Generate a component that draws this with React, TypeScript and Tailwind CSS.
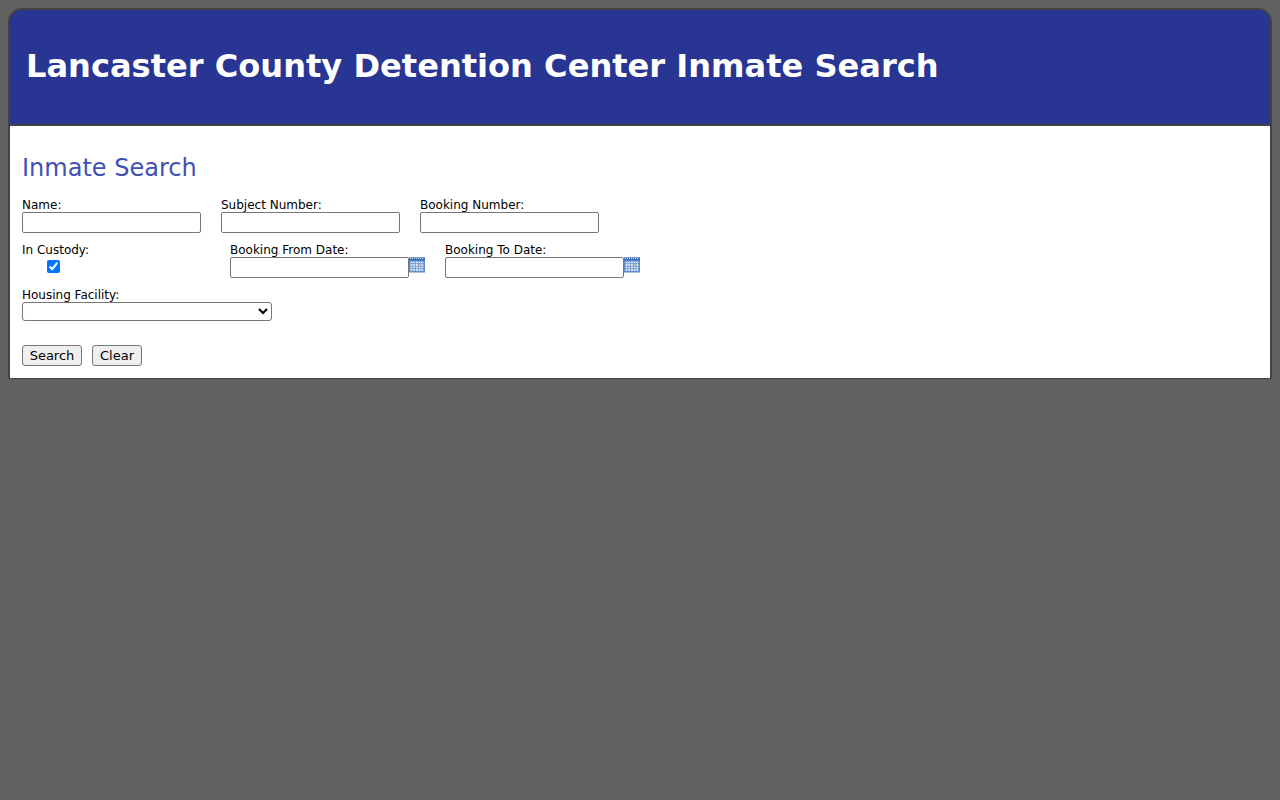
const font = "font-['DejaVu_Sans',sans-serif]";

function CalendarIcon() {
  const cells = [];
  for (let r = 0; r < 4; r++) {
    for (let c = 0; c < 5; c++) {
      const today = r === 1 && c === 3;
      cells.push(
        <rect key={`${r}-${c}`} x={1.5 + c * 2.7} y={4.5 + r * 2.5} width="2" height="1.9" fill={today ? "#e3c98a" : "#dbe6f7"} />
      );
    }
  }
  return (
    <svg width="16" height="16" viewBox="0 0 16 16" className="shrink-0 self-start">
      <rect x="0" y="0.5" width="16" height="15" fill="#5d8ccb" />
      <rect x="0" y="0.5" width="16" height="3" fill="#3f6fb5" />
      <path d="M1 1.5h14" stroke="#c6d8f0" strokeDasharray="1 1" />
      {cells}
    </svg>
  );
}

function Field({ label, className, children }: { label: string; className?: string; children: React.ReactNode }) {
  return (
    <div className={className}>
      <label className="block h-[15px] text-[12px] leading-[17px] text-black">{label}</label>
      {children}
    </div>
  );
}

const inputClass = "block w-[179px] h-[21px] border border-[#767676] rounded-[2px] bg-white px-0.5 text-[13.33px]";

export default function App() {
  return (
    <div className={`min-h-[800px] bg-[#616161] p-2 ${font}`}>
      {/* Header */}
      <div className="h-[118px] bg-[#283593] border-2 border-[#424242] rounded-t-[14px] flex items-center pl-4 pb-[3px]">
        <h1 className="text-[32.1px] font-bold text-white leading-[38px]">Lancaster County Detention Center Inmate Search</h1>
      </div>

      {/* Search form */}
      <div className="h-[253px] bg-white border-2 border-t-0 border-[#424242] border-b-[1px] border-x-[2px] pl-3">
        <h2 className="pt-[26px] text-[24px] leading-[32px] text-[#3f51b5]">Inmate Search</h2>

        <div className="flex mt-[13px]">
          <Field label="Name:" className="mr-5">
            <input className={inputClass} />
          </Field>
          <Field label="Subject Number:" className="mr-5">
            <input className={inputClass} />
          </Field>
          <Field label="Booking Number:">
            <input className={inputClass} />
          </Field>
        </div>

        <div className="flex mt-[9px]">
          <Field label="In Custody:" className="w-[208px]">
            <input type="checkbox" defaultChecked className="block ml-[25px] mt-[3px] w-[13px] h-[13px]" />
          </Field>
          <Field label="Booking From Date:" className="w-[215px]">
            <div className="flex">
              <input className={inputClass} />
              <CalendarIcon />
            </div>
          </Field>
          <Field label="Booking To Date:">
            <div className="flex">
              <input className={inputClass} />
              <CalendarIcon />
            </div>
          </Field>
        </div>

        <Field label="Housing Facility:" className="mt-[9px]">
          <select className="block w-[250px] h-[19px] border border-[#767676] rounded-[3px] bg-white text-[13.33px]" />
        </Field>

        <div className="flex gap-2.5 mt-6">
          <button className="h-[21px] w-[60px] border border-[#767676] rounded-[3px] bg-[#efefef] text-[13px] text-black">Search</button>
          <button className="h-[21px] w-[50px] border border-[#767676] rounded-[3px] bg-[#efefef] text-[13px] text-black">Clear</button>
        </div>
      </div>
    </div>
  );
}
